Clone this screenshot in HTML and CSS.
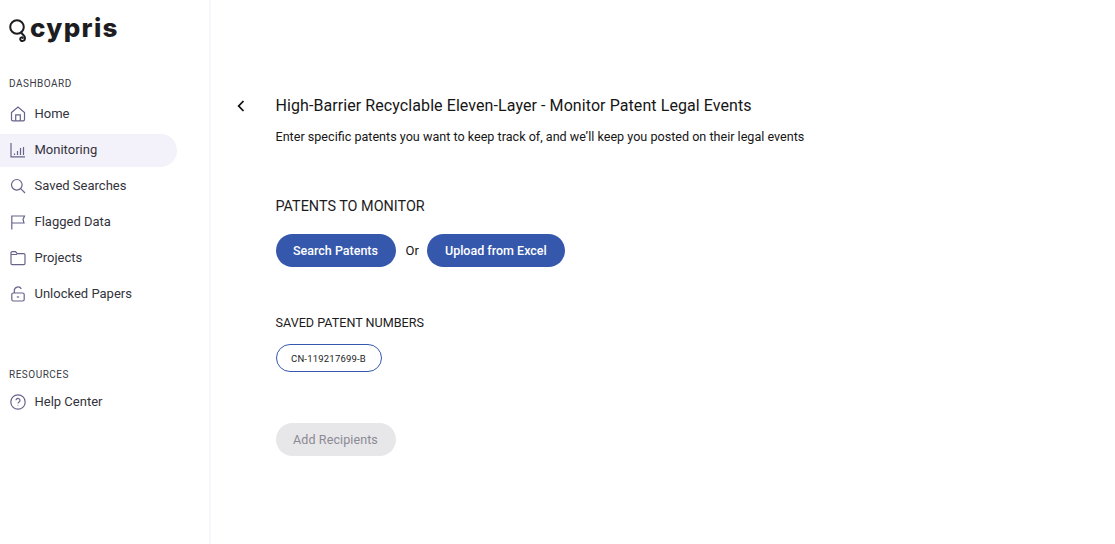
FILE: index.html
```html
<!DOCTYPE html>
<html lang="en">
<head>
<meta charset="utf-8">
<title>Cypris - Monitor Patent Legal Events</title>
<link rel="stylesheet" href="styles.css">
</head>
<body>
<div class="app">
  <aside class="sidebar">
    <div class="logo">
      <svg class="logo-mark" width="20" height="26" viewBox="0 0 20 26" fill="none" stroke="#1d1d21" stroke-width="2" stroke-linecap="round">
        <circle cx="9" cy="9" r="6.8"/>
        <path d="M13 14.500l3 3.200c1.600 1.800 1.200 4.600-.9 5.200-1.800.5-3.300-1-2.800-2.500.4-1.200 1.900-1.400 2.500-.5"/>
      </svg>
      <span class="logo-text">cypris</span>
    </div>
    <div class="section-label first">DASHBOARD</div>
    <nav class="nav nav-main">
      <a class="nav-item">
        <svg class="icon" viewBox="0 0 16 16"><path d="M1.500 6.500L8 1l6.500 5.500v6.900c0 .9-.6 1.400-1.400 1.400H2.900c-.8 0-1.400-.5-1.400-1.400z"/><path d="M5.700 14.800V8.800h4.600v6"/></svg>
        <span>Home</span>
      </a>
      <a class="nav-item active">
        <svg class="icon" viewBox="0 0 16 16"><path d="M1 1v13.800h14"/><path d="M4.500 11.500v1.500M7.500 9v4M10.500 6v7M13.500 5v8"/></svg>
        <span>Monitoring</span>
      </a>
      <a class="nav-item">
        <svg class="icon" viewBox="0 0 16 16"><circle cx="6.800" cy="6.800" r="5.300"/><path d="M10.700 10.700L15 15"/></svg>
        <span>Saved Searches</span>
      </a>
      <a class="nav-item">
        <svg class="icon" viewBox="0 0 16 16"><path d="M1.800 15.500V2h12.700l-1.500 3.500 1 3.500H1.800"/></svg>
        <span>Flagged Data</span>
      </a>
      <a class="nav-item">
        <svg class="icon" viewBox="0 0 16 16"><path d="M1 4V2.800c0-.7.500-1.200 1.200-1.200h3.300l1.700 2.100h6.600c.800 0 1.200.5 1.200 1.200v8.400c0 .8-.5 1.300-1.200 1.300H2.200c-.7 0-1.200-.5-1.200-1.300zM1 4.500h6"/></svg>
        <span>Projects</span>
      </a>
      <a class="nav-item">
        <svg class="icon" viewBox="0 0 16 16"><rect x="1.800" y="7" width="12.400" height="8" rx="1.500"/><path d="M4.300 7V4.600a3.700 3.700 0 0 1 7-1.600"/><path d="M6.800 11h2.400"/></svg>
        <span>Unlocked Papers</span>
      </a>
    </nav>
    <div class="section-label second">RESOURCES</div>
    <nav class="nav nav-resources">
      <a class="nav-item">
        <svg class="icon" viewBox="0 0 16 16"><circle cx="8" cy="8" r="7.200"/><path d="M6 6.300a2 2 0 1 1 3 1.800c-.7.400-1 .8-1 1.500"/><path d="M8 11.500v.5"/></svg>
        <span>Help Center</span>
      </a>
    </nav>
  </aside>
  <main class="main">
    <header class="page-head">
      <button class="back" aria-label="Back">
        <svg width="8" height="12" viewBox="0 0 8 12" fill="none" stroke="#111" stroke-width="1.800"><path d="M6.500 1L1.700 6l4.800 5"/></svg>
      </button>
      <h1 class="title">High-Barrier Recyclable Eleven-Layer - Monitor Patent Legal Events</h1>
    </header>
    <div class="content">
      <p class="subtitle">Enter specific patents you want to keep track of, and we’ll keep you posted on their legal events</p>
      <h2 class="heading-lg">PATENTS TO MONITOR</h2>
      <div class="actions">
        <button class="btn btn-search">Search Patents</button>
        <span class="or">Or</span>
        <button class="btn btn-upload">Upload from Excel</button>
      </div>
      <h3 class="heading-sm">SAVED PATENT NUMBERS</h3>
      <div class="chips"><span class="chip">CN-119217699-B</span></div>
      <button class="btn btn-disabled" disabled>Add Recipients</button>
    </div>
  </main>
</div>
</body>
</html>
```
FILE: styles.css
```css
* { box-sizing: border-box; }
html, body { margin: 0; height: 100%; }
body {
  background: #fff;
  font-family: Roboto, "Liberation Sans", sans-serif;
  color: #1a1a1a;
  overflow: hidden;
}
.app { display: flex; height: 544px; }
.sidebar {
  width: 211px;
  flex: none;
  background: #fff;
  border-right: 2px solid #f7f6fb;
}
.logo {
  display: flex;
  align-items: center;
  gap: 2px;
  height: 30px;
  margin: 13px 0 0 8px;
}
.logo-mark { flex: none; margin-top: 5px; }
.logo-text {
  font-family: Inter, "Liberation Sans", sans-serif;
  font-weight: 800;
  font-size: 26px;
  letter-spacing: 1.3px;
  line-height: 30px;
  color: #1d1d21;
}
.section-label {
  font-size: 10px;
  line-height: 12px;
  letter-spacing: 0.5px;
  color: #3a3a44;
  padding-left: 9px;
}
.section-label.first { margin-top: 35px; }
.section-label.second { margin-top: 58px; }
.nav { display: flex; flex-direction: column; gap: 3px; }
.nav-main { margin-top: 8px; }
.nav-resources { margin-top: 5px; }
.nav-item {
  display: flex;
  align-items: center;
  gap: 8.500px;
  width: 177px;
  height: 33px;
  padding-left: 10px;
  padding-bottom: 3px;
  border-radius: 0 17px 17px 0;
  font-size: 13px;
  color: #33333c;
}
.nav-item.active { background: #f3f1f9; }
.icon {
  width: 16px;
  height: 16px;
  flex: none;
  margin-top: 2px;
  fill: none;
  stroke: #67648a;
  stroke-width: 1.200;
}
.main { flex: 1; min-width: 0; }
.page-head {
  display: flex;
  align-items: center;
  margin-top: 95px;
  height: 21px;
  padding-left: 26px;
}
.back {
  width: 38.500px;
  padding: 0;
  border: 0;
  background: none;
  display: flex;
  flex: none;
}
.title {
  margin: 0;
  font-size: 16px;
  font-weight: 400;
  letter-spacing: 0.08px;
  line-height: 21px;
  color: #161616;
}
.content { padding-left: 64.500px; }
.subtitle {
  margin: 12px 0 0;
  font-size: 12.600px;
  line-height: 17px;
  color: #161616;
}
.heading-lg {
  margin: 53px 0 0;
  font-size: 14.400px;
  font-weight: 400;
  line-height: 17px;
  color: #1c1c1c;
}
.actions { display: flex; align-items: center; margin-top: 19px; }
.or { font-size: 13px; margin: 0 8px 0 10px; color: #161616; }
.btn {
  height: 33px;
  border: 0;
  border-radius: 17px;
  font-family: inherit;
  font-size: 12.500px;
  font-weight: 500;
  padding: 0;
}
.btn-search { width: 120px; background: #3558ad; color: #fff; }
.btn-upload { width: 138px; background: #3558ad; color: #fff; }
.heading-sm {
  margin: 48px 0 0;
  font-size: 12.600px;
  font-weight: 400;
  line-height: 16px;
  color: #1c1c1c;
}
.chips { display: flex; margin-top: 13px; }
.chip {
  display: flex;
  align-items: center;
  justify-content: center;
  width: 106px;
  height: 28px;
  border: 1px solid #3558ad;
  border-radius: 14px;
  font-size: 9.500px;
  letter-spacing: 0.2px;
  color: #1c1c1c;
}
.btn-disabled {
  display: block;
  width: 120px;
  margin-top: 51px;
  background: #e7e6e9;
  color: #8b8a94;
  font-weight: 400;
  font-size: 12.500px;
  letter-spacing: 0.1px;
}
```
